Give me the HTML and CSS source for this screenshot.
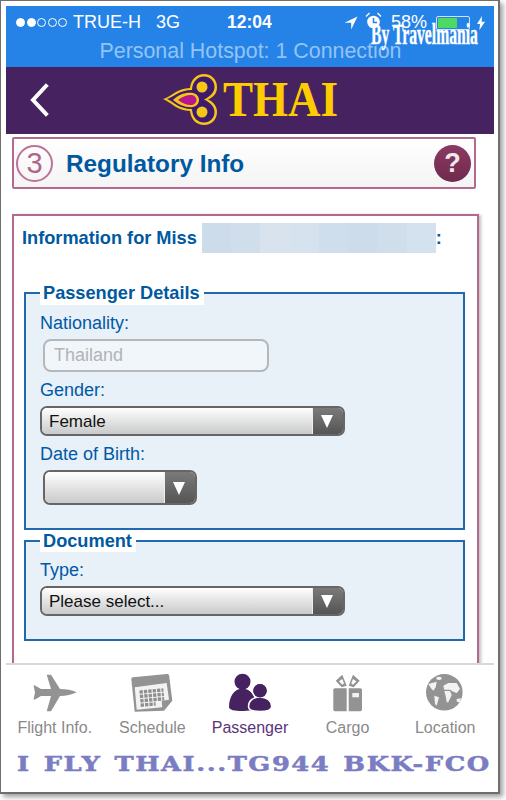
FILE: index.html
```html
<!DOCTYPE html>
<html lang="en">
<head>
<meta charset="utf-8">
<title>Regulatory Info</title>
<link rel="stylesheet" href="styles.css">
</head>
<body>
<div class="frame">
  <header class="status">
    <div class="status-row">
      <div class="status-left">
        <span class="signal"><i class="dot on"></i><i class="dot on"></i><i class="dot"></i><i class="dot"></i><i class="dot"></i></span>
        <span class="carrier">TRUE-H</span>
        <span class="net">3G</span>
      </div>
      <div class="clock">12:04</div>
      <div class="status-right">
        <svg class="loc" width="14" height="14" viewBox="0 0 14 14"><path d="M13.500.5.500 6.800h6.700V13.500z" fill="#fff"/></svg>
        <svg class="alarm" width="17" height="18" viewBox="0 0 17 18"><circle cx="8.500" cy="10" r="6.300" fill="#fff"/><path d="M8.500 6v4.500h3.500" stroke="#2583e8" stroke-width="1.500" fill="none"/><path d="M1 4.500 4.500 1M16 4.500 12.500 1" stroke="#fff" stroke-width="1.300"/></svg>
        <span class="pct">58%</span>
        <span class="battery"><span class="battery-fill"></span></span>
        <svg class="bolt" width="8" height="14" viewBox="0 0 8 14"><path d="M5 0 0 8h3L2.400 14 8 5.700H4.600z" fill="#fff"/></svg>
      </div>
    </div>
    <div class="hotspot">Personal Hotspot: 1 Connection</div>
    <div class="watermark">By Travelmania</div>
  </header>

  <nav class="navbar">
    <svg class="back" width="22" height="34" viewBox="0 0 22 34"><path d="M17 3 4 17l13 14" fill="none" stroke="#fff" stroke-width="4" stroke-linecap="square"/></svg>
    <div class="logo">
      <svg class="emblem" width="55" height="51" viewBox="5 4 55 51">
        <path d="M5 29C13 27 19 18 32 18 33 9 39 4 46 4 54 4 59 10 59 17 59 23 56 27 50 29.500 56 32 59 37 59 42 59 49 54 55 46 55 39 55 33 50 32 41 19 41 13 32 5 29z" fill="#f5c518"/>
        <path d="M9 29C16 27 21 20 34 20 34.500 11 40 6.500 46 6.500 52 6.500 56.500 11 56.500 17 56.500 22 53 26 46 29.500 53 33 56.500 37 56.500 42 56.500 48 52 52.500 46 52.500 40 52.500 34.500 48 34 39 21 39 16 32 9 29z" fill="#3d1a6e"/>
        <path d="M15 30C21 24 28 22 35 23 39 24 41 27 41 30 41 33 39 36 35 37 28 38 21 35 15 30z" fill="#f5c518"/>
        <path d="M20 30C25 26 30 24.500 34 25 37 25.500 38.500 28 38.500 30 38.500 32 37 34.500 34 35 30 35.500 25 34 20 30z" fill="#b8168c"/>
        <circle cx="44" cy="17" r="5.500" fill="#f5c518"/>
        <circle cx="44" cy="42" r="5.500" fill="#f5c518"/>
      </svg>
      <span class="logo-word">THAI</span>
    </div>
  </nav>

  <main class="page">
    <section class="title-card">
      <span class="step">3</span>
      <h1 class="title">Regulatory Info</h1>
      <span class="help">?</span>
    </section>

    <section class="panel">
      <h2 class="info-head">Information for Miss <span class="redact"><i></i><i></i><i></i><i></i><i></i><i></i><i></i><i></i></span>:</h2>

      <fieldset class="group group-passenger">
        <legend class="legend">Passenger Details</legend>
        <div class="label label-nat">Nationality:</div>
        <div class="input-ro">Thailand</div>
        <div class="label label-gender">Gender:</div>
        <div class="select select-wide"><span class="select-text">Female</span><span class="select-btn"></span></div>
        <div class="label label-dob">Date of Birth:</div>
        <div class="select select-small"><span class="select-text"></span><span class="select-btn"></span></div>
      </fieldset>

      <fieldset class="group group-doc">
        <legend class="legend legend-doc">Document</legend>
        <div class="label label-type">Type:</div>
        <div class="select select-wide"><span class="select-text">Please select...</span><span class="select-btn"></span></div>
      </fieldset>
    </section>
  </main>

  <footer class="tabs">
    <div class="tab">
      <svg width="46" height="40" viewBox="0 0 46 40"><path d="M44.700 19.300C40 17 34 16 28 16L19 1.700H14.700L19 16H9L3 12.500H1.500L3 19.500 1.500 26.500H3L9 23H19L14.700 38.300H19L28 23C34 23 40 21.500 44.700 19.300z" fill="#939393"/></svg>
      <span class="tab-label">Flight Info.</span>
    </div>
    <div class="tab">
      <svg width="42" height="40" viewBox="0 0 42 40"><path d="M.3 6C.3 5 1 4.500 2 4.300L36 1c1.500 0 2 .5 2.200 2L41.300 27.700 33 37.700 3.700 38.700z" fill="#939393"/><path d="M3.700 14.300 35.700 10 38 26.700 30.700 27.700 31.300 34.300 5.700 36.700z" fill="#f2f2f2"/><g transform="rotate(-5 21 24)" fill="none" stroke="#8f8f8f" stroke-width="3.400"><path d="M9 18H33" stroke-dasharray="3.300 1.100"/><path d="M9 22.400H33" stroke-dasharray="3.300 1.100"/><path d="M9 26.800H33" stroke-dasharray="3.300 1.100"/><path d="M9 31.200H24" stroke-dasharray="3.300 1.100"/></g></svg>
      <span class="tab-label">Schedule</span>
    </div>
    <div class="tab tab-active">
      <svg width="44" height="40" viewBox="0 0 44 40"><circle cx="14.500" cy="8.700" r="8" fill="#462360"/><path d="M1 34C1 24 6 15.500 14.500 15.500 23 15.500 28 24 28 34 28 37 20 38 14 38 7 38 1 37 1 34z" fill="#462360"/><circle cx="32" cy="17.700" r="7.500" fill="#462360" stroke="#fff" stroke-width="1.500"/><path d="M20.500 33.500C20.500 28 25 24 32 24 39 24 43.700 28 43.700 33.500 43.700 37 39 38.500 32 38.500 25 38.500 20.500 37 20.500 33.500z" fill="#462360" stroke="#fff" stroke-width="1.500"/><circle cx="32" cy="17.700" r="6.700" fill="#462360"/></svg>
      <span class="tab-label">Passenger</span>
    </div>
    <div class="tab">
      <svg width="31" height="40" viewBox="0 0 31 40"><path fill-rule="evenodd" d="M10.300 1.700 3.700 7.700 9.700 14.300 14.700 12.700zM10.300 6 7 8.300 10.300 11.700 12 10.300z" fill="#939393"/><path fill-rule="evenodd" d="M21 1.700 27.700 7.700 21.700 14.300 16.700 12.700zM21 6 24.300 8.300 21 11.700 19.300 10.300z" fill="#939393"/><path d="M1.300 17C1.300 16 2 15.300 3 15.300H14.700V38.300H3C2 38.300 1.300 37.600 1.300 36.600zM16.700 15.300H28.300C29.300 15.300 30 16 30 17V36.600C30 37.600 29.300 38.300 28.300 38.300H16.700z" fill="#939393"/><rect x="20.300" y="20" width="6.700" height="4.300" fill="#f2f2f2"/></svg>
      <span class="tab-label">Cargo</span>
    </div>
    <div class="tab">
      <svg width="38" height="40" viewBox="0 0 38 40"><circle cx="18.300" cy="19.300" r="18.300" fill="#939393"/><path d="M2.300 11 10.700 8.700 9.700 14.300 7.300 17.700 5 15.300zM8.300 22.700 13 24.300 10.700 32.700 9 31zM17.300 12.700 22.300 10 30.700 10 34 16 30.700 20 27.300 18.700 24 16.700 18.300 16.700zM18.300 18 24 18 25.700 22 22.300 29.300 20.700 29.300 19.700 23.300zM30.700 26 35 25.300 34 29.300 30.700 28.700z" fill="#f2f2f2"/><ellipse cx="13" cy="5.300" rx="2.800" ry="1.600" fill="#f2f2f2"/></svg>
      <span class="tab-label">Location</span>
    </div>
  </footer>
  <div class="caption"><span class="caption-text">I FLY THAI...TG944 BKK-FCO</span></div>
</div>
</body>
</html>
```

FILE: styles.css
```css
* { box-sizing: border-box; }
html, body { margin: 0; background: #fff; }
body { width: 506px; height: 800px; overflow: hidden; font-family: "Liberation Sans", Arial, sans-serif; }

.frame {
  width: 500px; height: 794px;
  border-style: solid; border-color: #6e6e6e; border-width: 1px 2px 2px 1px;
  padding: 5px 4px 0 5px;
  display: flex; flex-direction: column;
  background: #fff;
  box-shadow: 3px 3px 5px rgba(0,0,0,.38);
}

.status {
  position: relative; flex: none; height: 61px;
  background: #2583e8; color: #fff;
  padding: 6px 9px 0 10px;
}
.status-row { display: flex; align-items: center; height: 21px; font-size: 18px; position: relative; }
.status-left { display: flex; align-items: center; }
.signal { display: flex; gap: 1.500px; margin-right: 6px; }
.dot { width: 9px; height: 9px; border-radius: 50%; border: 1px solid #fff; display: block; }
.dot.on { background: #fff; }
.carrier { margin-right: 15px; }
.clock { position: absolute; left: 211px; font-weight: 700; font-size: 17.500px; }
.status-right { margin-left: auto; display: flex; align-items: center; }
.loc { margin-right: 7px; }
.alarm { margin-right: 9px; margin-top: -3px; }
.pct { margin-right: 9px; }
.battery { width: 34px; height: 14px; border: 1px solid #cfe3f8; border-radius: 2px; display: block; padding: 1px; }
.battery-fill { display: block; width: 19px; height: 100%; background: #4cd964; }
.bolt { margin-left: 7px; }
.hotspot { text-align: center; font-size: 21.400px; color: #93c3f4; margin-top: 6px; line-height: 24px; }
.watermark {
  position: absolute; right: 16px; top: 13px;
  font: 700 29px/30px "Liberation Serif", serif; color: #fff; white-space: nowrap;
  transform: scaleX(.54); transform-origin: right center;
  -webkit-text-stroke: .4px #fff;
}

.navbar {
  flex: none; height: 67px; background: #462360;
  display: flex; align-items: center;
  padding-left: 23px;
}
.back { flex: none; margin-top: -1px; }
.logo { display: flex; align-items: center; margin-left: 112px; gap: 5px; }
.emblem { flex: none; margin-top: -2px; }
.logo-word {
  font: 700 50px/50px "Liberation Serif", serif; color: #fc0;
  transform: scaleX(.9); transform-origin: left center;
  margin-top: -3px;
}

.page { flex: none; height: 529px; overflow: hidden; padding: 3px 0 0 6px; background: #fff; }

.title-card {
  width: 464px; height: 52px;
  border: 2px solid #b5688d; border-radius: 2px;
  background: linear-gradient(#fff, #f4f4f4);
  display: flex; align-items: center;
  padding: 0 3px 0 2px;
}
.step {
  width: 37px; height: 37px; border-radius: 50%; border: 2px solid #bc7397;
  color: #b0668a; font-size: 29px; line-height: 33px; text-align: center; flex: none;
}
.title { margin: 2px 0 0 13px; font-size: 24.300px; font-weight: 700; color: #00599f; flex: 1; }
.help {
  width: 37px; height: 37px; border-radius: 50%;
  background: linear-gradient(#8b3a62, #6f2a4e); color: #f2e8ee;
  font-size: 27px; font-weight: 700; line-height: 37px; text-align: center; flex: none;
}

.panel {
  width: 467px; height: 470px; margin-top: 25px;
  border: 2px solid #b5688d;
  box-shadow: 2px 1px 3px rgba(0,0,0,.25);
  padding: 7px 12px 0 8px;
  background: #fff;
}
.info-head {
  margin: 0; font-size: 18.200px; font-weight: 700; color: #00599f;
  height: 30px; display: flex; align-items: center; white-space: pre;
}
.redact { display: flex; width: 234px; height: 30px; }
.redact i { flex: 1; background: #cddcea; }
.redact i:nth-child(2) { background: #d0deec; }
.redact i:nth-child(3) { background: #d8e3ee; }
.redact i:nth-child(4) { background: #d6e2ee; }
.redact i:nth-child(5) { background: #cfdeec; }
.redact i:nth-child(6) { background: #cddcea; }
.redact i:nth-child(7) { background: #d0deec; }
.redact i:nth-child(8) { background: #d4e1ee; }

.group {
  margin: 0 0 0 2px; padding: 0 0 0 14px; width: 441px; min-width: 0;
  border: 2px solid #2069ae; background: #e8f0f8;
}
.group-passenger { height: 249px; margin-top: 28px; }
.group-doc { height: 111px; }
.legend {
  padding: 0 4px 0 3px; background: #fff;
  font-size: 18.200px; font-weight: 700; color: #00599f; line-height: 24px;
}
.legend-doc { line-height: 22px; }
.label { font-size: 18px; color: #0059a6; line-height: 22px; margin-top: 7px; }
.label-dob { margin-bottom: 5px; }
.input-ro {
  width: 226px; height: 33px; margin: 5px 0 0 3px;
  border: 2px solid #b4b8bc; border-radius: 8px;
  background: #f1f6fb; color: #b2b4b6; font-size: 18px; line-height: 29px; padding-left: 9px;
}
.select {
  display: flex; height: 30px; border: 2px solid #666; border-radius: 7px; overflow: hidden;
  font-size: 17px; color: #111;
}
.select-wide { width: 305px; margin-top: 5px; }
.select-small { width: 154px; height: 35px; margin-left: 3px; }
.select-text {
  flex: 1; background: linear-gradient(#fff 0%, #e6e6e6 45%, #c8cacc 100%);
  padding-left: 7px; line-height: 28px;
  border-right: 1px solid #eee;
}
.select-btn {
  flex: none; width: 30px; position: relative;
  background: linear-gradient(#7a7a7a, #555);
}
.select-btn::after {
  content: ""; position: absolute; left: 8px; top: 50%; margin-top: -6px;
  border-left: 6.500px solid transparent; border-right: 6.500px solid transparent;
  border-top: 13px solid #fff;
}

.tabs {
  flex: none; height: 87px; display: grid; grid-template-columns: repeat(5, 1fr);
  border-top: 2px solid #d8d8d8; background: #fff; padding-top: 8px;
}
.tab { display: flex; flex-direction: column; align-items: center; }
.tab svg { display: block; height: 40px; }
.tab-label { font-size: 16px; color: #8a8a8a; line-height: 18px; margin-top: 6px; white-space: nowrap; }
.tab-active .tab-label { color: #5a3478; }

.caption { flex: none; height: 42px; padding-left: 11px; }
.caption-text {
  display: block; width: max-content;
  font: 700 20px/28px "DejaVu Serif", serif; color: #7b7dc2;
  letter-spacing: 1.200px; word-spacing: 2px; white-space: nowrap;
  transform: scaleX(1.287); transform-origin: left center;
  -webkit-text-stroke: .5px #7b7dc2;
}
```
